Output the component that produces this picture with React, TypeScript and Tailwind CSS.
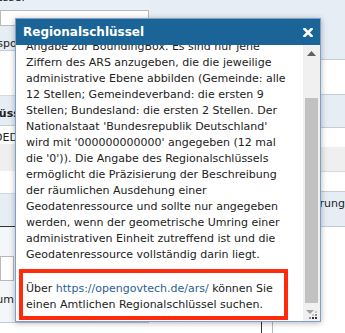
const lines = [
  'Angabe zur BoundingBox. Es sind nur jene',
  'Ziffern des ARS anzugeben, die die jeweilige',
  'administrative Ebene abbilden (Gemeinde: alle',
  '12 Stellen; Gemeindeverband: die ersten 9',
  'Stellen; Bundesland: die ersten 2 Stellen. Der',
  "Nationalstaat 'Bundesrepublik Deutschland'",
  "wird mit '000000000000' angegeben (12 mal",
  "die '0')). Die Angabe des Regionalschlüssels",
  'ermöglicht die Präzisierung der Beschreibung',
  'der räumlichen Ausdehung einer',
  'Geodatenressource und sollte nur angegeben',
  'werden, wenn der geometrische Umring einer',
  'administrativen Einheit zutreffend ist und die',
  'Geodatenressource vollständig darin liegt.',
];

function CloseIcon() {
  return (
    <svg width="10" height="9" viewBox="0 0 10 9">
      <path d="M1.5 1 L8.5 8 M8.5 1 L1.5 8" stroke="#fff" strokeWidth="2.6" strokeLinecap="square" />
    </svg>
  );
}

function Scrollbar() {
  return (
    <div className="w-[17px] bg-[#f0f0f0] flex flex-col">
      <div className="h-[17px] flex items-center justify-center">
        <svg width="9" height="5" viewBox="0 0 9 5">
          <path d="M0 5 L4.5 0 L9 5 Z" fill="#606060" />
        </svg>
      </div>
      <div className="h-[36px]" />
      <div className="ml-[2px] w-[13px] h-[205px] bg-[#c1c1c1]" />
      <div className="flex-1 flex items-end justify-end pr-[1px] pb-[1px]">
        <svg width="14" height="13" viewBox="0 0 14 13">
          <path d="M1 3 L9 3 L5 7 Z" fill="#a0a0a0" />
          <rect x="10" y="4" width="2" height="2" fill="#c8c8c8" />
          <rect x="10" y="7" width="2" height="2" fill="#909090" />
          <rect x="7" y="7" width="2" height="2" fill="#c8c8c8" />
          <rect x="4" y="10" width="2" height="2" fill="#909090" />
          <rect x="7" y="10" width="2" height="2" fill="#333" />
          <rect x="10" y="10" width="2" height="2" fill="#333" />
        </svg>
      </div>
    </div>
  );
}

function Background() {
  return (
    <div className="flex h-full text-[11px] text-[#222]">
      <div className="w-[160px] flex flex-col">
        <div className="h-[10px] bg-[#e9eff6] overflow-hidden">
          <div className="w-[25px] flex justify-end whitespace-nowrap -mt-[10px]">Adresse:</div>
        </div>
        <div className="h-[16px] bg-[#e9eff6]">
          <div className="w-[149px] h-full border border-[#b9b9b9] bg-white" />
        </div>
        <div className="h-[25px] bg-[#e6edf5] border-b border-[#c4ccd4] pt-[10px] whitespace-nowrap">
          <span className="-ml-[26px] inline-block">Transport</span>
        </div>
        <div className="h-[45px] bg-white border-b border-[#d4dae0]" />
        <div className="h-[30px] bg-[#e6edf5] border-b border-[#c4ccd4] pt-[10px] whitespace-nowrap font-bold">
          <span className="-ml-[80px] inline-block">Regionalschlüssel</span>
        </div>
        <div className="h-[18px] bg-white pt-[4px] whitespace-nowrap">
          <span className="-ml-[6px] inline-block">DEDS</span>
        </div>
        <div className="h-[27px] bg-[#efefef]" />
        <div className="h-[23px] bg-white border-b border-[#d4dae0]" />
        <div className="h-[33px] bg-[#e6edf5] border-b border-[#333]" />
        <div className="h-[29px] bg-[#f4f7fa]" />
        <div className="h-[25px] bg-[#f4f7fa]">
          <div className="w-[14px] h-full border border-[#b9b9b9] bg-white" />
        </div>
        <div className="h-[42px] bg-[#f4f7fa] border-b border-[#c4ccd4] pt-[11px] whitespace-nowrap">
          <div className="w-[14px] flex justify-end">Zeitraum</div>
        </div>
        <div className="flex-1 bg-white" />
      </div>
      <div className="flex-1 flex flex-col">
        <div className="h-[60px] bg-[#e6edf5] border-b border-[#c4ccd4]" />
        <div className="h-[35px] bg-white border-b border-[#c4ccd4]" />
        <div className="h-[33px] bg-[#e6edf5] border-b border-[#c4ccd4]" />
        <div className="h-[19px] bg-white" />
        <div className="h-[25px] bg-[#efefef] border-b border-[#d4dae0]" />
        <div className="h-[20px] bg-white border-b border-[#c4ccd4]" />
        <div className="h-[35px] bg-[#e6edf5] border-b border-[#c4ccd4] pt-[4px] pl-[117px] whitespace-nowrap">
          Aktualisierung
        </div>
        <div className="flex-1 bg-white flex items-end">
          <div className="ml-[112px] w-px h-[11px] bg-[#333]" />
          <div className="ml-[10px] w-px h-[11px] bg-[#b0b8c0]" />
        </div>
      </div>
    </div>
  );
}

export default function App() {
  return (
    <div className="relative w-[345px] h-[333px] overflow-hidden bg-white font-['DejaVu_Sans',Verdana,sans-serif]">
      <Background />
      <div className="absolute left-[15px] top-[18px] w-[306px] h-[304px] border border-[#7fa0c2] bg-white flex flex-col shadow-[0_1px_6px_rgba(0,0,0,0.3)]">
        <div className="h-[26px] bg-[#1b6497] flex items-center justify-between pl-[7px] pr-[7px]">
          <span className="text-white font-bold text-[12px]">Regionalschlüssel</span>
          <CloseIcon />
        </div>
        <div className="flex-1 flex overflow-hidden">
          <div className="flex-1 overflow-hidden pl-[10px] text-[11px] leading-[16px] text-[#222]">
            <div className="-mt-[6px] whitespace-nowrap">
              {lines.map((l) => (
                <div key={l}>{l}</div>
              ))}
            </div>
            <div className="mt-[6px] -ml-[7px] w-[269px] border-4 border-[#ff2a0c] pl-[3px] pt-[8px] pb-[3px] whitespace-nowrap">
              <div>
                Über <a className="text-[#2a5f92]">https://opengovtech.de/ars/</a> können Sie
              </div>
              <div>einen Amtlichen Regionalschlüssel suchen.</div>
            </div>
          </div>
          <Scrollbar />
        </div>
      </div>
    </div>
  );
}
